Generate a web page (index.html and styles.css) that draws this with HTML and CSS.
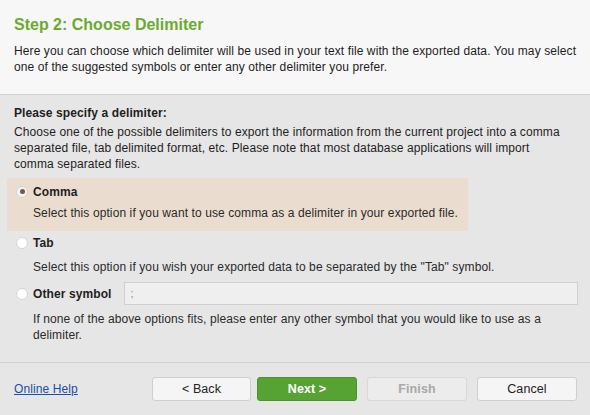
FILE: index.html
```html
<!DOCTYPE html>
<html>
<head>
<meta charset="utf-8">
<link rel="stylesheet" href="styles.css">
</head>
<body>
<div class="wizard">
  <div class="header">
    <h1 class="title">Step 2: Choose Delimiter</h1>
    <p class="intro">Here you can choose which delimiter will be used in your text file with the exported data. You may select one of the suggested symbols or enter any other delimiter you prefer.</p>
  </div>
  <div class="content">
    <div class="section-title">Please specify a delimiter:</div>
    <p class="section-text">Choose one of the possible delimiters to export the information from the current project into a comma separated file, tab delimited format, etc. Please note that most database applications will import comma separated files.</p>
    <div class="option selected">
      <div class="opt-row"><span class="radio checked"></span><span class="opt-label">Comma</span></div>
      <div class="opt-desc">Select this option if you want to use comma as a delimiter in your exported file.</div>
    </div>
    <div class="option tab">
      <div class="opt-row"><span class="radio"></span><span class="opt-label">Tab</span></div>
      <div class="opt-desc">Select this option if you wish your exported data to be separated by the "Tab" symbol.</div>
    </div>
    <div class="option other">
      <div class="opt-row"><span class="radio"></span><span class="opt-label">Other symbol</span><span class="symbol-input">;</span></div>
      <div class="opt-desc">If none of the above options fits, please enter any other symbol that you would like to use as a delimiter.</div>
    </div>
  </div>
  <div class="footer">
    <a class="help" href="#">Online Help</a>
    <div class="buttons">
      <span class="btn back">&lt; Back</span>
      <span class="btn primary">Next &gt;</span>
      <span class="btn disabled">Finish</span>
      <span class="btn">Cancel</span>
    </div>
  </div>
</div>
</body>
</html>
```

FILE: styles.css
```css
* { box-sizing: border-box; }
html, body { margin: 0; padding: 0; }
body {
  width: 590px;
  height: 415px;
  background: #e6e6e6;
  font-family: "Liberation Sans", Arial, sans-serif;
  font-size: 12px;
  letter-spacing: 0.1px;
  color: #1e1e1e;
  overflow: hidden;
}
.wizard { display: flex; flex-direction: column; height: 415px; }
.header {
  background: #f7f7f7;
  border-bottom: 1px solid #d2d2d2;
  height: 95px;
  padding: 14px 4px 0 14px;
}
.title {
  margin: 0;
  font-size: 16px;
  line-height: 22px;
  font-weight: bold;
  letter-spacing: 0;
  color: #6aab2e;
}
.intro { margin: 7px 0 0; line-height: 16px; }
.content { padding: 10px 14px 0 14px; flex: 1; }
.section-title { font-weight: bold; line-height: 16px; }
.section-text { margin: 3px 0 0; line-height: 16px; width: 556px; }
.option { margin-left: -7px; padding: 0 7px; }
.option.selected {
  background: #eaddd0;
  width: 461px;
  margin-top: 6px;
  padding-top: 5px;
  padding-bottom: 10px;
}
.option.tab { margin-top: 3px; }
.option.other { margin-top: 7px; }
.opt-row { display: flex; align-items: center; height: 17px; }
.option.other .opt-row { height: 23px; margin-right: -9px; }
.radio {
  width: 12px; height: 12px; border-radius: 50%;
  background: #fff; border: 1px solid #d4d4d4;
  margin: 0 5px 0 2px;
  display: flex; align-items: center; justify-content: center;
  flex: none;
}
.radio.checked { background: #f6f2ee; }
.radio.checked::after {
  content: ""; width: 5px; height: 5px; border-radius: 50%; background: #6b5b52;
}
.opt-label { font-weight: bold; white-space: nowrap; flex: none; }
.opt-desc { padding-left: 19px; margin-top: 5px; line-height: 16px; color: #2a2a2a; }
.option.tab .opt-desc { margin-top: 8px; }
.option.other .opt-desc { margin-top: 6px; width: 560px; }
.symbol-input {
  margin-left: 12px;
  flex: 1;
  height: 23px;
  background: #efefef;
  border: 1px solid #cfcfcf;
  color: #8a8a9a;
  padding-left: 6px;
  line-height: 21px;
  font-size: 11px;
}
.footer {
  border-top: 1px solid #d0d0d0;
  height: 53px;
  display: flex;
  align-items: center;
  padding: 0 13px 0 14px;
  justify-content: space-between;
}
.help { color: #1a4ea8; text-decoration: underline; line-height: 16px; }
.buttons { display: flex; gap: 10px; }
.btn {
  width: 100px; height: 24px;
  border: 1px solid #cfcfcf; border-radius: 3px;
  background: #f5f5f5;
  display: flex; align-items: center; justify-content: center;
  color: #222;
  font-size: 12.5px;
}
.btn.back { width: 99px; margin-right: -4px; }
.btn.primary { background: #56a233; border-color: #4b9230; color: #fff; font-weight: bold; }
.btn.disabled { color: #a8a8a8; background: #ececec; border-color: #d8d8d8; font-weight: bold; }
```
